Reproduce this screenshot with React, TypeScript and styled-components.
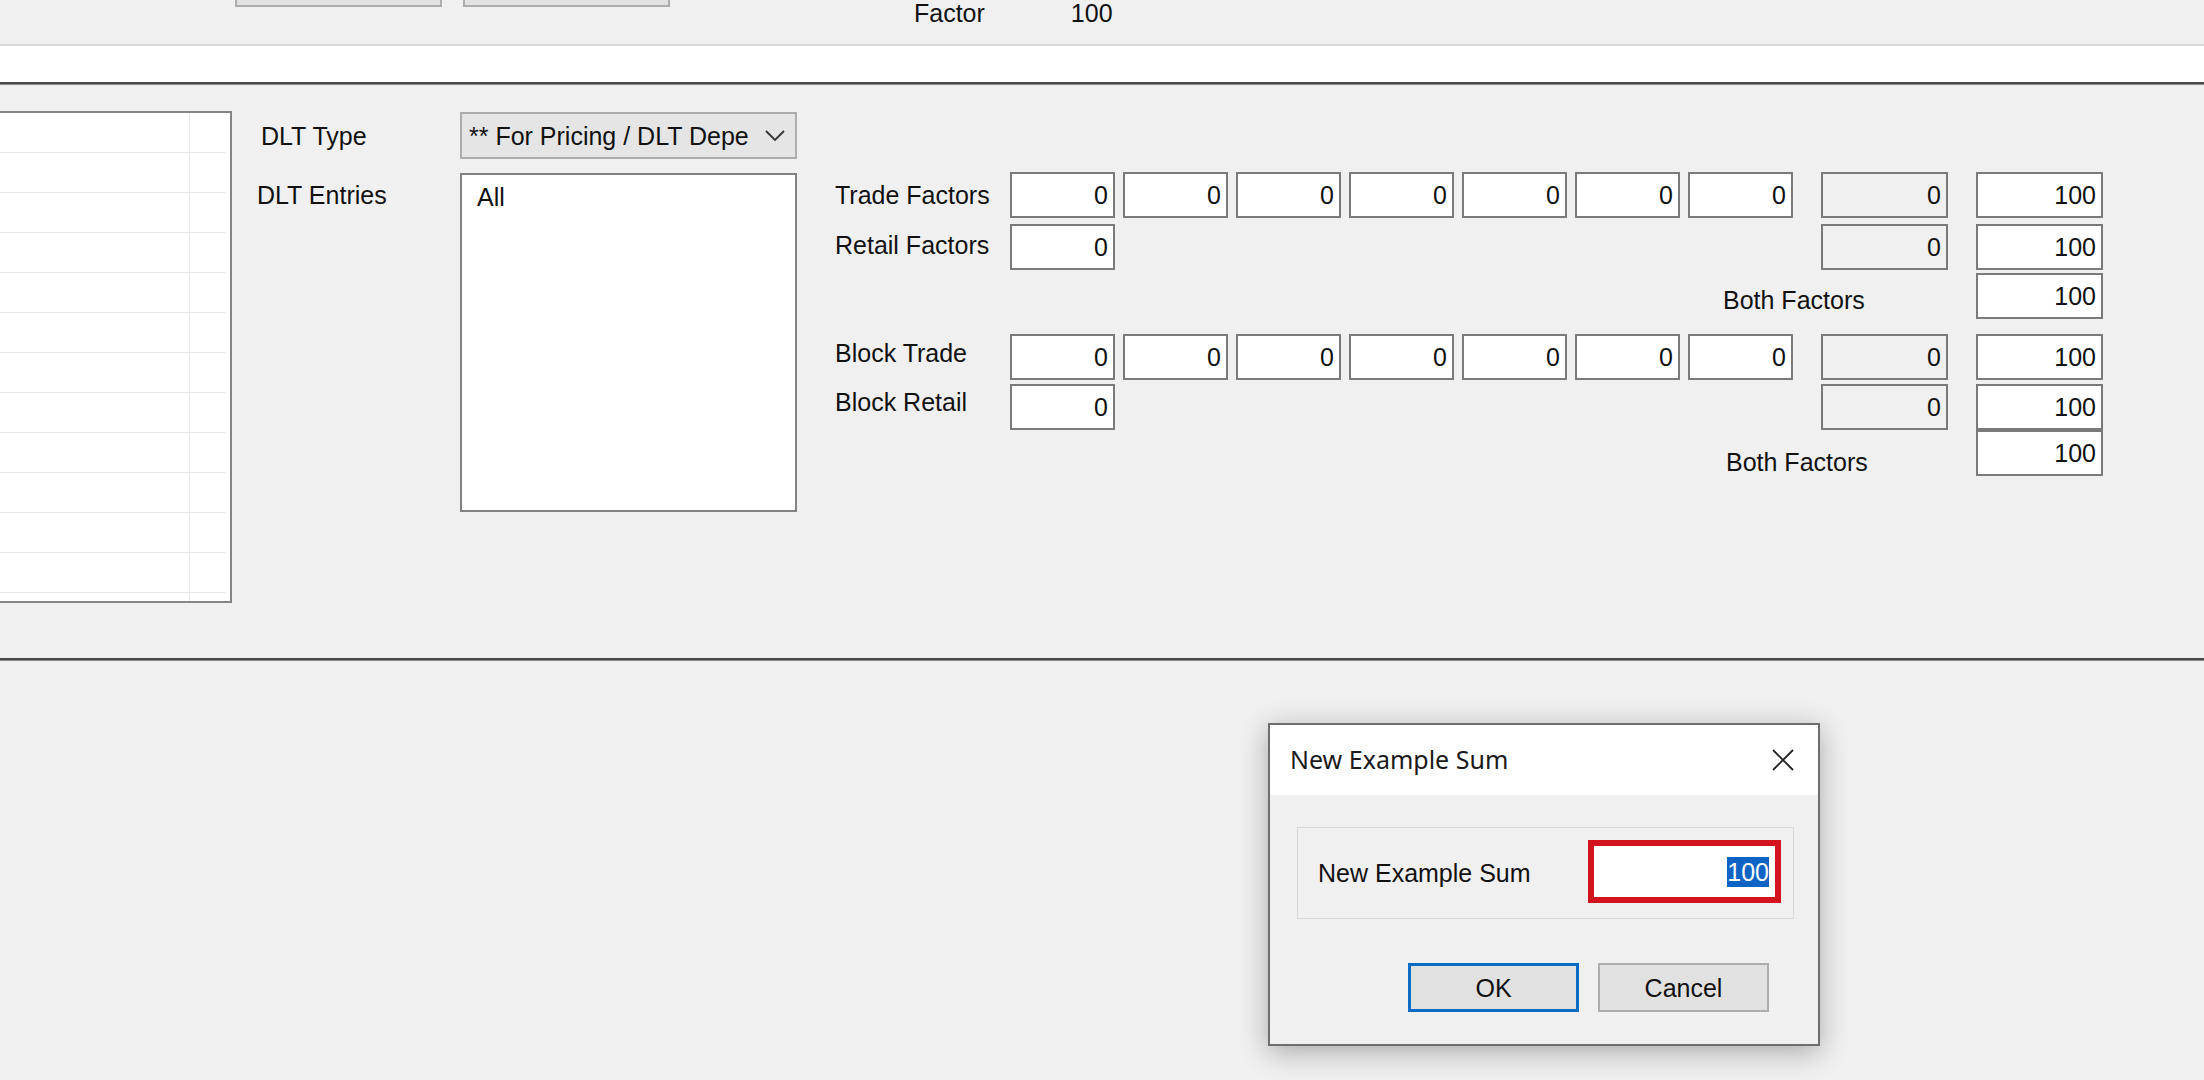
import React from "react";
import styled, { createGlobalStyle } from "styled-components";

const Global = createGlobalStyle`
  html, body { margin: 0; padding: 0; background: #f0f0f0; overflow: hidden; }
  * { box-sizing: border-box; }
`;

const Page = styled.div`
  position: relative;
  width: 2204px;
  height: 1080px;
  overflow: hidden;
  background: #f0f0f0;
  font-family: "Liberation Sans", Arial, sans-serif;
  font-size: 25px;
  color: #111;
  display: flex;
  flex-direction: column;
`;

const TopBar = styled.div`
  height: 44px;
  display: flex;
  align-items: flex-start;
  padding-left: 235px;
  flex-shrink: 0;
`;

const StubButton = styled.div<{ $gap?: number }>`
  width: 207px;
  height: 37px;
  margin-top: -30px;
  margin-left: ${(p) => p.$gap ?? 0}px;
  background: #e1e1e1;
  border: 2px solid #adadad;
`;

const TopText = styled.span<{ $gap: number }>`
  margin-left: ${(p) => p.$gap}px;
  line-height: 26px;
  white-space: nowrap;
`;

const LightRule = styled.div`
  height: 2px;
  background: #d8d8d8;
  flex-shrink: 0;
`;

const WhiteStrip = styled.div`
  height: 36px;
  background: #ffffff;
  flex-shrink: 0;
`;

const DarkRule = styled.div`
  height: 3px;
  background: #4a4a4a;
  border-bottom: 1px solid #8a8a8a;
  flex-shrink: 0;
`;

const Panel = styled.div`
  height: 573px;
  display: flex;
  align-items: flex-start;
  flex-shrink: 0;
`;

const DataGrid = styled.div`
  width: 232px;
  height: 492px;
  margin-top: 26px;
  background: #fff;
  border: 2px solid #858585;
  border-left: none;
  overflow: hidden;
  flex-shrink: 0;
`;

const GridRow = styled.div`
  height: 40px;
  display: flex;
  border-bottom: 1px solid #e6e6e6;
  margin-right: 5px;
`;

const GridCell = styled.div<{ $w?: number }>`
  width: ${(p) => (p.$w ? `${p.$w}px` : "auto")};
  flex: ${(p) => (p.$w ? "none" : "1")};
  border-right: ${(p) => (p.$w ? "1px solid #e6e6e6" : "none")};
`;

const DltBlock = styled.div`
  margin-left: 27px;
  margin-top: 27px;
  display: grid;
  grid-template-columns: 201px 337px;
  grid-template-rows: 47px 339px;
  row-gap: 14px;
`;

const Label = styled.div<{ $top?: number; $shift?: number; $center?: boolean }>`
  line-height: 30px;
  white-space: nowrap;
  align-self: ${(p) => (p.$center ? "center" : "start")};
  margin-top: ${(p) => p.$top ?? 0}px;
  margin-left: ${(p) => p.$shift ?? 0}px;
`;

const Combo = styled.div`
  display: flex;
  align-items: center;
  background: #e5e5e5;
  border: 2px solid #adadad;
  padding-left: 7px;
  padding-right: 10px;
`;

const ComboText = styled.span`
  width: 281px;
  overflow: hidden;
  white-space: nowrap;
  line-height: 30px;
`;

const Chevron = styled.svg`
  margin-left: auto;
  flex-shrink: 0;
`;

const ListBox = styled.div`
  background: #fff;
  border: 2px solid #828282;
  padding: 7px 15px;
  line-height: 30px;
`;

const FactorGrid = styled.div`
  margin-left: 38px;
  margin-top: 87px;
  display: grid;
  grid-template-columns: 175px repeat(7, 113px) 175px 127px;
  grid-template-rows: 52px 49px 61px 50px 46px 46px;
  align-items: start;
`;

const Placed = styled.div<{ $c: string; $r: number }>`
  grid-column: ${(p) => p.$c};
  grid-row: ${(p) => p.$r};
`;

const FactorBox = styled.div<{ $gray?: boolean; $wide?: boolean }>`
  width: ${(p) => (p.$wide ? 127 : 105)}px;
  height: 46px;
  margin-left: ${(p) => (p.$gray ? 20 : 0)}px;
  background: ${(p) => (p.$gray ? "#f0f0f0" : "#ffffff")};
  border: 2px solid #7a7a7a;
  text-align: right;
  padding-right: 5px;
  line-height: 42px;
`;

const Dialog = styled.div`
  position: absolute;
  left: 1268px;
  top: 723px;
  width: 552px;
  height: 323px;
  border: 2px solid #6e6e6e;
  background: #f0f0f0;
  box-shadow: 0 6px 26px rgba(0, 0, 0, 0.3);
  display: flex;
  flex-direction: column;
`;

const TitleBar = styled.div`
  height: 70px;
  background: #fff;
  display: flex;
  align-items: center;
  justify-content: space-between;
  padding: 0 23px 0 20px;
  flex-shrink: 0;
`;

const Title = styled.span`
  font-family: "Noto Sans", "Open Sans", sans-serif;
  font-size: 25px;
  color: #1a1a1a;
  margin-top: -2px;
`;

const DialogBody = styled.div`
  flex: 1;
  padding: 32px 24px 0 27px;
  display: flex;
  flex-direction: column;
`;

const GroupBox = styled.div`
  height: 92px;
  border: 1px solid #d9d9d9;
  display: flex;
  align-items: center;
  justify-content: space-between;
  padding: 0 12px 0 20px;
`;

const RedInput = styled.div`
  width: 193px;
  height: 63px;
  margin-top: -3px;
  border: 6px solid #d3141f;
  background: #fff;
  display: flex;
  align-items: center;
  justify-content: flex-end;
  padding-right: 6px;
`;

const Selected = styled.span`
  background: #0f63c4;
  color: #fff;
  line-height: 30px;
  height: 30px;
`;

const ButtonRow = styled.div`
  display: flex;
  justify-content: flex-end;
  gap: 19px;
  margin-top: 44px;
  padding-right: 25px;
`;

const DlgButton = styled.div<{ $primary?: boolean }>`
  width: 171px;
  height: 49px;
  background: #e1e1e1;
  border: ${(p) => (p.$primary ? "3px solid #0a6cc4" : "2px solid #adadad")};
  display: flex;
  align-items: center;
  justify-content: center;
  line-height: 30px;
`;

const rows = Array.from({ length: 13 });
const sevenCols = [2, 3, 4, 5, 6, 7, 8];

export default function App() {
  return (
    <>
      <Global />
      <Page>
        <TopBar>
          <StubButton />
          <StubButton $gap={21} />
          <TopText $gap={244}>Factor</TopText>
          <TopText $gap={86}>100</TopText>
        </TopBar>
        <LightRule />
        <WhiteStrip />
        <DarkRule />
        <Panel>
          <DataGrid>
            {rows.map((_, i) => (
              <GridRow key={i}>
                <GridCell $w={190} />
                <GridCell />
              </GridRow>
            ))}
          </DataGrid>
          <DltBlock>
            <Label $center $shift={2}>DLT Type</Label>
            <Combo>
              <ComboText>** For Pricing / DLT Dependent</ComboText>
              <Chevron width="20" height="12" viewBox="0 0 20 12">
                <polyline points="1,1 10,10 19,1" fill="none" stroke="#333" strokeWidth="1.8" />
              </Chevron>
            </Combo>
            <Label $top={7} $shift={-2}>DLT Entries</Label>
            <ListBox>All</ListBox>
          </DltBlock>
          <FactorGrid>
            <Placed $c="1" $r={1}><Label $top={8}>Trade Factors</Label></Placed>
            {sevenCols.map((c) => (
              <Placed key={`t${c}`} $c={String(c)} $r={1}><FactorBox>0</FactorBox></Placed>
            ))}
            <Placed $c="9" $r={1}><FactorBox $gray $wide>0</FactorBox></Placed>
            <Placed $c="10" $r={1}><FactorBox $wide>100</FactorBox></Placed>

            <Placed $c="1" $r={2}><Label $top={6}>Retail Factors</Label></Placed>
            <Placed $c="2" $r={2}><FactorBox>0</FactorBox></Placed>
            <Placed $c="9" $r={2}><FactorBox $gray $wide>0</FactorBox></Placed>
            <Placed $c="10" $r={2}><FactorBox $wide>100</FactorBox></Placed>

            <Placed $c="8 / 10" $r={3}><Label $top={12} $shift={35}>Both Factors</Label></Placed>
            <Placed $c="10" $r={3}><FactorBox $wide>100</FactorBox></Placed>

            <Placed $c="1" $r={4}><Label $top={4}>Block Trade</Label></Placed>
            {sevenCols.map((c) => (
              <Placed key={`b${c}`} $c={String(c)} $r={4}><FactorBox>0</FactorBox></Placed>
            ))}
            <Placed $c="9" $r={4}><FactorBox $gray $wide>0</FactorBox></Placed>
            <Placed $c="10" $r={4}><FactorBox $wide>100</FactorBox></Placed>

            <Placed $c="1" $r={5}><Label $top={3}>Block Retail</Label></Placed>
            <Placed $c="2" $r={5}><FactorBox>0</FactorBox></Placed>
            <Placed $c="9" $r={5}><FactorBox $gray $wide>0</FactorBox></Placed>
            <Placed $c="10" $r={5}><FactorBox $wide>100</FactorBox></Placed>

            <Placed $c="8 / 10" $r={6}><Label $top={17} $shift={38}>Both Factors</Label></Placed>
            <Placed $c="10" $r={6}><FactorBox $wide>100</FactorBox></Placed>
          </FactorGrid>
        </Panel>
        <DarkRule />

        <Dialog>
          <TitleBar>
            <Title>New Example Sum</Title>
            <svg width="24" height="22" viewBox="0 0 24 22">
              <line x1="2" y1="1" x2="22" y2="21" stroke="#222" strokeWidth="1.8" />
              <line x1="22" y1="1" x2="2" y2="21" stroke="#222" strokeWidth="1.8" />
            </svg>
          </TitleBar>
          <DialogBody>
            <GroupBox>
              <Label $center>New Example Sum</Label>
              <RedInput>
                <Selected>100</Selected>
              </RedInput>
            </GroupBox>
            <ButtonRow>
              <DlgButton $primary>OK</DlgButton>
              <DlgButton>Cancel</DlgButton>
            </ButtonRow>
          </DialogBody>
        </Dialog>
      </Page>
    </>
  );
}
